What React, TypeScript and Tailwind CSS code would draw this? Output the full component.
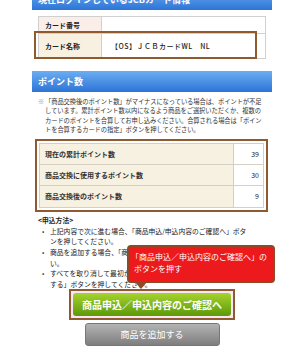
import React from "react";

const jp = { fontFamily: '"Noto Sans CJK JP", "Noto Sans", sans-serif' };

export default function App() {
  return (
    <div className="relative w-[300px] h-[350px] overflow-hidden bg-white text-[#222]" style={jp}>
      <div className="ml-[32px] w-[240px]">
        {/* top header (cut) */}
        <div className="mt-[-11px] h-[21px] bg-gradient-to-b from-[#6cadf2] to-[#2c74d6] text-white font-bold text-[9px] leading-[21px] pl-[6px] whitespace-nowrap">
          現在ログインしているJCBカード情報
        </div>

        {/* card table */}
        <div className="relative mt-[6px] ml-[6px] w-[228px]">
          <div className="border border-[#d0d0d0] text-[7px]">
            <div className="flex h-[17px] border-b border-[#d0d0d0]">
              <div className="w-[63px] bg-[#fbeee8] border-r border-[#d8cfc0] pl-[6px] flex items-center font-bold">カード番号</div>
              <div className="flex-1 bg-white"></div>
            </div>
            <div className="flex h-[24px]">
              <div className="w-[63px] bg-[#f8f1e2] border-r border-[#d8cfc0] pl-[6px] flex items-center font-bold">カード名称</div>
              <div className="flex-1 bg-white pl-[9px] flex items-center tracking-[0.5px] font-medium">【OS】ＪＣＢカードWL　NL</div>
            </div>
          </div>
          <div className="absolute left-[-4px] top-[15px] w-[223px] h-[28px] border-2 border-[#8e5a2e]"></div>
        </div>

        {/* points header */}
        <div className="mt-[12px] h-[21px] bg-gradient-to-b from-[#6cadf2] to-[#2c74d6] text-white font-bold text-[9px] leading-[21px] pl-[6px]">
          ポイント数
        </div>

        {/* note */}
        <div className="flex mt-[5px] pl-[6px] text-[6.3px] leading-[9.3px] text-[#333]">
          <span className="w-[7px] text-[#999]">※</span>
          <p className="whitespace-nowrap tracking-[-0.1px]">
            「商品交換後のポイント数」がマイナスになっている場合は、ポイントが不足<br />
            しています。累計ポイント数以内になるよう商品をご選択いただくか、複数の<br />
            カードのポイントを合算してお申し込みください。合算される場合は「ポイン<br />
            トを合算するカードの指定」ボタンを押してください。
          </p>
        </div>

        {/* points table */}
        <div className="mt-[5px] ml-[3px] w-[233px] border-2 border-[#8e5a2e] p-[2px] text-[7px]">
          <div className="border border-[#d6d0c4]">
            {[
              ["現在の累計ポイント数", "39"],
              ["商品交換に使用するポイント数", "30"],
              ["商品交換後のポイント数", "9"],
            ].map(([l, v], i) => (
              <div key={i} className={`flex h-[21px] ${i < 2 ? "border-b border-[#d6d0c4]" : ""}`}>
                <div className="flex-1 bg-[#f7f1e2] pl-[5px] flex items-center font-bold text-[#333]">{l}</div>
                <div className="w-[30px] bg-white border-l border-[#d6d0c4] flex items-center justify-end pr-[4px]">{v}</div>
              </div>
            ))}
          </div>
        </div>

        {/* method */}
        <div className="mt-[3px] pl-[6px] text-[6.8px] leading-[10.6px] text-[#222] whitespace-nowrap">
          <div className="font-bold">&lt;申込方法&gt;</div>
          <ul className="pl-[4px]">
            <li className="flex">
              <span className="w-[8px]">•</span>
              <span>上記内容で次に進む場合、「商品申込/申込内容のご確認へ」ボタ<br />ンを押してください。</span>
            </li>
            <li className="flex">
              <span className="w-[8px]">•</span>
              <span>商品を追加する場合、「商品を追加する」ボタンを押してくださ<br />い。</span>
            </li>
            <li className="flex">
              <span className="w-[8px]">•</span>
              <span>すべてを取り消して最初からやり直す場合は「すべて取り消<br />する」ボタンを押してください。</span>
            </li>
          </ul>
        </div>

        {/* buttons */}
        <div className="flex flex-col items-center mt-[0px]">
          <div className="border-2 border-[#8e5a2e] p-[2px] bg-[#fbe6f8]">
            <div className="w-[158px] h-[23px] rounded-[3px] bg-gradient-to-b from-[#a6d32c] to-[#5c9a06] text-white font-bold text-[10px] flex items-center justify-center">
              商品申込／申込内容のご確認へ
            </div>
          </div>
          <div className="mt-[3px] w-[135px] h-[23px] rounded-[3px] bg-gradient-to-b from-[#b4b4b4] to-[#7e7e7e] border border-[#777] text-white text-[9px] flex items-center justify-center">
            商品を追加する
          </div>
        </div>
      </div>

      {/* tooltip */}
      <div className="absolute left-[127px] top-[245px] w-[148px] h-[38px] rounded-[4px] bg-[#ec1a1c] border-2 border-[#8e4a26] text-white text-[8px] leading-[12px] pl-[2px] pt-[4px] whitespace-nowrap">
        「商品申込／申込内容のご確認へ」の<br />
        <span className="pl-[3px]">ボタンを押す</span>
      </div>
      <div className="absolute left-[135px] top-[282px] w-0 h-0 border-l-[6px] border-r-[6px] border-t-[7px] border-l-transparent border-r-transparent border-t-[#8e4a26]"></div>
    </div>
  );
}
